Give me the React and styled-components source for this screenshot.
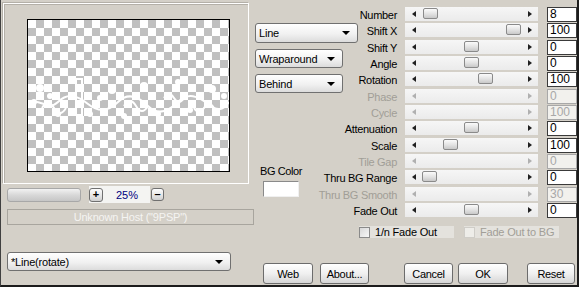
import React from "react";
import styled, { createGlobalStyle } from "styled-components";

const GlobalStyle = createGlobalStyle`
  html, body {
    margin: 0;
    padding: 0;
    background: #d4d0c8;
  }
  body {
    font-family: "Liberation Sans", Arial, sans-serif;
    font-size: 11px;
    color: #000;
  }
`;

const Window = styled.div`
  width: 579px;
  height: 287px;
  box-sizing: border-box;
  background: #d4d0c8;
  border-left: 1px solid #404040;
  border-right: 2px solid #1c1c1c;
  border-bottom: 2px solid #1c1c1c;
  display: flex;
  overflow: hidden;
`;

const LeftPane = styled.div`
  width: 254px;
  display: flex;
  flex-direction: column;
`;

const Frame = styled.div`
  margin: 3px 0 0 2px;
  width: 246px;
  height: 181px;
  box-sizing: border-box;
  border: 1px solid #fff;
  box-shadow: inset 1px 1px 0 #b4b0a8, -1px -1px 0 #b4b0a8;
  padding: 15px 0 0 23px;
`;

const Preview = styled.div`
  width: 203px;
  height: 153px;
  box-sizing: border-box;
  border: 1px solid #000;
  background: repeating-conic-gradient(#c0c0c0 0% 25%, #fff 0% 50%) 0 0 / 16px 16px;
  svg {
    display: block;
  }
`;

const ZoomRow = styled.div`
  margin: 3px 0 0 6px;
  height: 15px;
  display: flex;
  align-items: center;
`;

const ZoomBar = styled.div`
  width: 74px;
  height: 14px;
  box-sizing: border-box;
  border: 1px solid #a8a8a8;
  border-radius: 3px;
  background: linear-gradient(#f2f2f2, #d8d8d8 50%, #c6c6c6);
`;

const ZoomBox = styled.div`
  margin-left: 8px;
  width: 61px;
  height: 17px;
  background: #f4f4f2;
  display: flex;
  align-items: center;
`;

const TinyButton = styled.div`
  width: ${(p) => p.$size}px;
  height: ${(p) => p.$size}px;
  margin-left: ${(p) => p.$ml || 0}px;
  box-sizing: border-box;
  border: 1px solid #707070;
  border-radius: 3px;
  background: linear-gradient(#fdfdfd, #e4e4e4 60%, #cfcfcf);
  display: flex;
  align-items: center;
  justify-content: center;
  font-weight: bold;
  font-size: 11px;
  line-height: 1;
`;

const Percent = styled.span`
  margin-left: 13px;
  color: #000080;
  font-size: 11px;
`;

const StatusBox = styled.div`
  margin: 7px 0 0 6px;
  width: 247px;
  height: 16px;
  box-sizing: border-box;
  border: 1px solid #a8a59e;
  color: #f4f4f2;
  text-align: center;
  line-height: 14px;
  letter-spacing: -0.2px;
`;

const Select = styled.div`
  width: ${(p) => p.$w}px;
  height: ${(p) => p.$h}px;
  margin: ${(p) => p.$m || "0"};
  box-sizing: border-box;
  border: 1px solid #707070;
  border-radius: 3px;
  background: linear-gradient(#ffffff, #f1f1f1 55%, #dcdcdc);
  display: flex;
  align-items: center;
  justify-content: space-between;
  padding: 0 7px 0 3px;
  font-size: 11px;
  letter-spacing: -0.2px;

  &::after {
    content: "";
    width: 0;
    height: 0;
    border-left: 4px solid transparent;
    border-right: 4px solid transparent;
    border-top: 4px solid #000;
  }
`;

const RightPane = styled.div`
  flex: 1;
  display: flex;
  flex-direction: column;
`;

const Grid = styled.div`
  margin-top: 7px;
  display: grid;
  grid-template-columns: 52px 98px 133px 39px;
  grid-auto-rows: 16.33px;
`;

const Label = styled.div`
  grid-column: 1 / 3;
  grid-row: ${(p) => p.$row};
  text-align: right;
  padding-right: 8px;
  align-self: center;
  letter-spacing: -0.3px;
  white-space: nowrap;
  color: ${(p) => (p.$disabled ? "#a19e97" : "#000")};
`;

const Track = styled.div`
  grid-column: 3;
  grid-row: ${(p) => p.$row};
  height: 14px;
  position: relative;
  background: linear-gradient(#f6f6f6, #ebebeb);
  display: flex;
  align-items: center;
  justify-content: space-between;
  padding: 0 6px 0 7px;
  box-sizing: border-box;
`;

const Arrow = styled.span`
  width: 0;
  height: 0;
  border-top: 3.5px solid transparent;
  border-bottom: 3.5px solid transparent;
  ${(p) => (p.$dir === "left" ? "border-right" : "border-left")}: 4px solid
    ${(p) => (p.$disabled ? "#b0b0b0" : "#202020")};
`;

const Thumb = styled.div`
  position: absolute;
  top: 1px;
  width: 15px;
  height: 11px;
  box-sizing: border-box;
  border: 1px solid #8a8a8a;
  border-radius: 2px;
  background: linear-gradient(#fbfbfb, #e2e2e2 55%, #c9c9c9);
`;

const ValueBox = styled.div`
  grid-column: 4;
  grid-row: ${(p) => p.$row};
  justify-self: end;
  width: 30px;
  height: 15px;
  box-sizing: border-box;
  border: 1px solid ${(p) => (p.$disabled ? "#a8a8a8" : "#3a3a3a")};
  background: ${(p) => (p.$disabled ? "#f2f1ed" : "#fff")};
  color: ${(p) => (p.$disabled ? "#a8a8a8" : "#000")};
  padding-left: 2px;
  font-size: 12px;
  line-height: 13px;
`;

const DropStack = styled.div`
  grid-column: 1 / 3;
  grid-row: 2 / span 5;
  align-self: start;
  display: flex;
  flex-direction: column;
  gap: 6px;
`;

const BgGroup = styled.div`
  grid-column: 1;
  grid-row: 10 / span 4;
  display: flex;
  flex-direction: column;
  align-items: center;
  padding-top: 11px;
  letter-spacing: -0.4px;
`;

const Swatch = styled.div`
  margin-top: 4px;
  width: 36px;
  height: 16px;
  box-sizing: border-box;
  border: 1px solid;
  border-color: #8a8a8a #f0f0f0 #f0f0f0 #8a8a8a;
  background: #fff;
`;

const CheckRow = styled.div`
  margin-top: 7px;
  padding-left: 104px;
  display: flex;
  gap: 10px;
`;

const CheckItem = styled.div`
  width: 95px;
  height: 12px;
  background: #e4e2dd;
  display: flex;
  align-items: center;
  gap: 5px;
  letter-spacing: -0.2px;
  color: ${(p) => (p.$disabled ? "#a19e97" : "#000")};
`;

const CheckBox = styled.span`
  width: 11px;
  height: 11px;
  box-sizing: border-box;
  border: 1px solid ${(p) => (p.$disabled ? "#cfcdc8" : "#8a8a8a")};
  background: ${(p) =>
    p.$disabled ? "#eeede9" : "linear-gradient(135deg, #d8d8d8, #f8f8f8)"};
`;

const ButtonRow = styled.div`
  margin-top: 25px;
  height: 21px;
  display: flex;
  padding-left: 8px;
`;

const Button = styled.div`
  width: ${(p) => p.$w}px;
  margin-left: ${(p) => p.$ml || 0}px;
  height: 21px;
  box-sizing: border-box;
  border: 1px solid #6c6c6c;
  border-radius: 3px;
  background: linear-gradient(#ffffff, #f0f0f0 50%, #d6d6d6);
  display: flex;
  align-items: center;
  justify-content: center;
  font-size: 11px;
  letter-spacing: -0.3px;
`;

const sliders = [
  { label: "Number", value: "8", pos: 18 },
  { label: "Shift X", value: "100", pos: 101 },
  { label: "Shift Y", value: "0", pos: 59 },
  { label: "Angle", value: "0", pos: 59 },
  { label: "Rotation", value: "100", pos: 73 },
  { label: "Phase", value: "0", disabled: true },
  { label: "Cycle", value: "100", disabled: true },
  { label: "Attenuation", value: "0", pos: 59 },
  { label: "Scale", value: "100", pos: 38 },
  { label: "Tile Gap", value: "0", disabled: true },
  { label: "Thru BG Range", value: "0", pos: 17 },
  { label: "Thru BG Smooth", value: "30", disabled: true },
  { label: "Fade Out", value: "0", pos: 59 },
];

function PreviewArt() {
  const dots = [
    [12, 68, 4], [22, 76, 3], [84, 70, 4], [116, 66, 4], [150, 62, 3],
    [184, 69, 4], [30, 94, 3], [62, 94, 3], [96, 96, 3], [130, 94, 3],
    [162, 90, 3], [196, 76, 3], [6, 82, 3], [72, 78, 3],
  ];
  return (
    <svg width="201" height="151" viewBox="0 0 201 151">
      <g stroke="#fff" fill="none" strokeWidth="2">
        <path d="M0 84 C 10 76, 20 92, 30 82 S 50 76, 60 84 S 80 92, 90 82 S 110 76, 120 86 S 140 92, 150 82 S 170 76, 180 84 S 195 90, 201 82" />
        <path d="M14 88 q 6 -10 12 0 t 12 0" />
        <path d="M96 86 q 6 -10 12 0 t 12 0" />
        <path d="M136 78 q 5 -8 10 0 t 10 0" />
        <path d="M166 88 q 5 8 10 0 t 10 0" />
        <rect x="48" y="59" width="6" height="36" />
      </g>
      <g fill="#fff">
        {dots.map(([x, y, r], i) => (
          <circle key={i} cx={x} cy={y} r={r} />
        ))}
      </g>
    </svg>
  );
}

export default function App() {
  return (
    <>
      <GlobalStyle />
      <Window>
        <LeftPane>
          <Frame>
            <Preview>
              <PreviewArt />
            </Preview>
          </Frame>
          <ZoomRow>
            <ZoomBar />
            <ZoomBox>
              <TinyButton $size={14}>+</TinyButton>
              <Percent>25%</Percent>
            </ZoomBox>
            <TinyButton $size={13} $ml={1}>
              –
            </TinyButton>
          </ZoomRow>
          <StatusBox>Unknown Host ("9PSP")</StatusBox>
          <Select $w={224} $h={19} $m="27px 0 0 6px">
            *Line(rotate)
          </Select>
        </LeftPane>
        <RightPane>
          <Grid>
            {sliders.map((s, i) => (
              <React.Fragment key={s.label}>
                <Label $row={i + 1} $disabled={s.disabled}>
                  {s.label}
                </Label>
                <Track $row={i + 1}>
                  <Arrow $dir="left" $disabled={s.disabled} />
                  <Arrow $dir="right" $disabled={s.disabled} />
                  {!s.disabled && <Thumb style={{ left: s.pos }} />}
                </Track>
                <ValueBox $row={i + 1} $disabled={s.disabled}>
                  {s.value}
                </ValueBox>
              </React.Fragment>
            ))}
            <DropStack>
              <Select $w={103} $h={20}>
                Line
              </Select>
              <Select $w={88} $h={19}>
                Wraparound
              </Select>
              <Select $w={88} $h={19}>
                Behind
              </Select>
            </DropStack>
            <BgGroup>
              BG Color
              <Swatch />
            </BgGroup>
          </Grid>
          <CheckRow>
            <CheckItem>
              <CheckBox />
              1/n Fade Out
            </CheckItem>
            <CheckItem $disabled>
              <CheckBox $disabled />
              Fade Out to BG
            </CheckItem>
          </CheckRow>
          <ButtonRow>
            <Button $w={50}>Web</Button>
            <Button $w={49} $ml={7}>
              About...
            </Button>
            <Button $w={49} $ml={35}>
              Cancel
            </Button>
            <Button $w={50} $ml={5}>
              OK
            </Button>
            <Button $w={48} $ml={19}>
              Reset
            </Button>
          </ButtonRow>
        </RightPane>
      </Window>
    </>
  );
}
